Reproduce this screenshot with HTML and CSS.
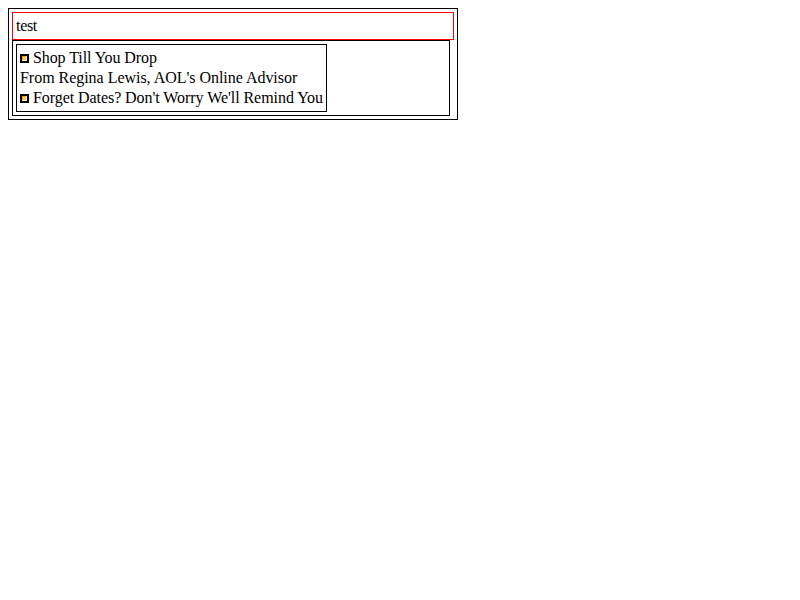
FILE: index.html
```
<!DOCTYPE html>
<html lang="en">
<head>
<meta charset="utf-8">
<title>test</title>
<link rel="stylesheet" href="styles.css">
</head>
<body>
<div class="outer">
  <div class="heading">test</div>
  <div class="content">
    <div class="links">
      <div class="first"><svg class="bullet" viewBox="0 0 5 5"><path fill="#fff0d8" d="M0 0h5v5H0z"/><path fill="#ff9c21" d="M0 0h4v4H0z"/><path fill="#ffc66b" d="M1 1h3v3H1z"/></svg> Shop Till You Drop</div>
      <div class="second">From Regina Lewis, AOL's Online Advisor</div>
      <div class="third"><svg class="bullet" viewBox="0 0 5 5"><path fill="#fff0d8" d="M0 0h5v5H0z"/><path fill="#ff9c21" d="M0 0h4v4H0z"/><path fill="#ffc66b" d="M1 1h3v3H1z"/></svg> Forget Dates? Don't Worry We'll Remind You</div>
    </div>
  </div>
</div>
</body>
</html>
```
FILE: styles.css
```
body {
  margin: 8px;
  background: #fff;
  color: #000;
  font: 16px/20px "Liberation Serif", serif;
}

.outer,
.heading,
.content,
.links {
  box-sizing: border-box;
  border: 1px solid #000;
  padding: 3px;
}

.outer {
  width: 450px;
}

.heading {
  border-color: #f00;
  letter-spacing: -0.3px;
}

.content {
  width: 438px;
}

.links {
  width: 311px;
  white-space: nowrap;
}

.first {
  letter-spacing: -0.08px;
}

.second {
  letter-spacing: -0.03px;
}

.third {
  letter-spacing: -0.06px;
}

.bullet {
  width: 5px;
  height: 5px;
  border: 2px solid #000;
  shape-rendering: crispEdges;
}
```
